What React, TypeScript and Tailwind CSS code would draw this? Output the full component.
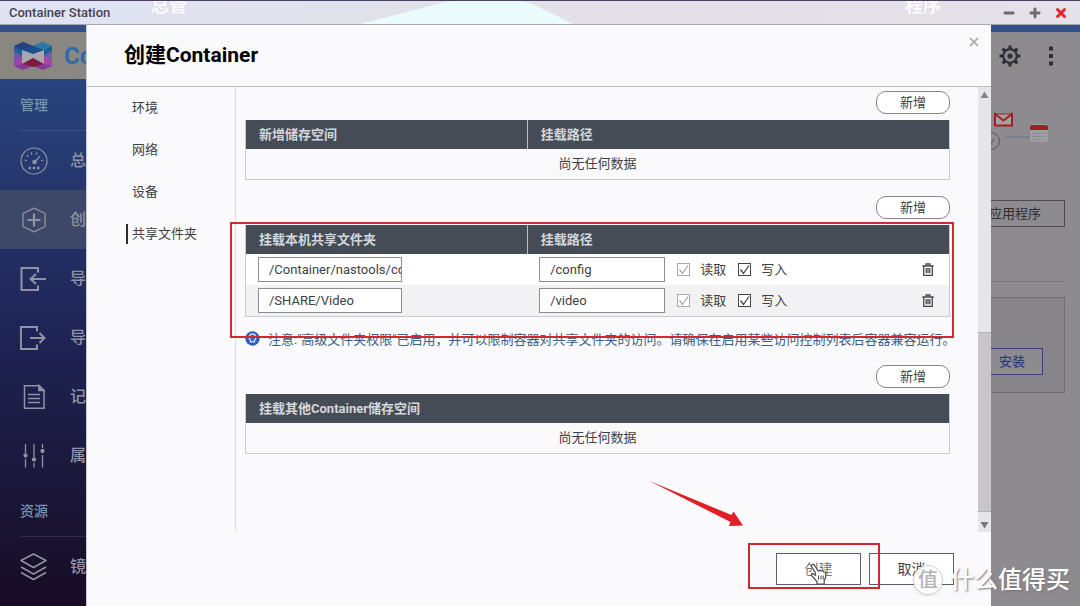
import type { ReactNode } from 'react';
import { Minus, Plus, X } from 'lucide-react';

const stroke = { fill: 'none', stroke: 'currentColor' };

// sidebar icons, all on the same 28px grid
const GaugeIcon = () => (
  <svg viewBox="0 0 28 28" className="size-7" {...stroke} strokeWidth="1.2">
    <circle cx="14" cy="14" r="13" />
    <path d="M4.5 13l2.5.8M6.8 8.3l1.8 1.6M11 5.4l.8 2.4M17 5.4l-.8 2.4M23.5 13l-2.5.8M14 16l6-7" />
    <circle cx="14.5" cy="15" r="1.6" fill="currentColor" />
    <path d="M8.500 21h2.500M12.800 21h2.500M17 21h2.500" strokeWidth="2.400" />
  </svg>
);

const CreateIcon = () => (
  <svg viewBox="0 0 28 28" className="size-7" {...stroke} strokeWidth="1.3">
    <path d="M14 2.200l11 5.300v13L14 25.800 3 20.500v-13z" strokeLinejoin="round" />
    <path d="M14 7.500v13M7.500 14h13" strokeWidth="2.200" />
  </svg>
);

const ImportIcon = () => (
  <svg viewBox="0 0 28 28" className="size-7" {...stroke} strokeWidth="2">
    <path d="M18 7.500V3H1.500v22H18v-4.500" />
    <path d="M26 14H11M16 9l-5.500 5 5.500 5" />
  </svg>
);

const ExportIcon = () => (
  <svg viewBox="0 0 28 28" className="size-7" {...stroke} strokeWidth="2">
    <path d="M17 7.500V3H.9v22H17v-4.500" />
    <path d="M10 14h14M19.500 9l5 5-5 5" />
  </svg>
);

const LogIcon = () => (
  <svg viewBox="0 0 28 28" className="size-7" {...stroke} strokeWidth="1.5">
    <path d="M4.500 2.700h15v4.500h4.500v18H4.500z" />
    <path d="M19 2.500l5 5h-5z" fill="currentColor" />
    <path d="M8 11.500h12M8 15.500h12M8 19.500h12" />
  </svg>
);

const SlidersIcon = () => (
  <svg viewBox="0 0 28 28" className="size-7" {...stroke} strokeWidth="1.3">
    <path d="M5.500 2v9M5.500 17v8.500M14 2v13M14 21v4.500M22.500 2v4M22.500 13v12.500" />
    <g fill="currentColor">
      <circle cx="5.500" cy="13.500" r="1.500" />
      <circle cx="14" cy="17.500" r="1.500" />
      <circle cx="22.500" cy="9" r="1.500" />
    </g>
  </svg>
);

const LayersIcon = () => (
  <svg viewBox="0 0 28 28" className="size-7" {...stroke} strokeWidth="1.500" strokeLinejoin="round">
    <path d="M13.500 1L26 7.500 13.500 14.500 1 7.500z" />
    <path d="M1 14l12.500 7L26 14M1 19.500l12.500 7 12.500-7" />
  </svg>
);

const TrashIcon = () => (
  <svg viewBox="0 0 12 13" className="h-[13px] w-3" {...stroke} strokeWidth="1.300">
    <path d="M.3 3h11.400M4 2.800V1h4v1.800M1.700 3v9.300h8.600V3M4.200 5v5.300M6 5v5.300M7.800 5v5.300" />
  </svg>
);

const GearIcon = () => (
  <svg viewBox="0 0 24 24" className="size-6" {...stroke}>
    <circle cx="12" cy="12" r="6.800" strokeWidth="2.200" />
    <circle cx="12" cy="12" r="2.600" fill="currentColor" stroke="none" />
    <path
      d="M12 1.500v4M12 18.500v4M1.500 12h4M18.500 12h4M4.600 4.600l2.800 2.800M16.600 16.600l2.800 2.800M4.600 19.400l2.800-2.800M16.600 7.400l2.800-2.800"
      strokeWidth="3.200"
    />
  </svg>
);

const Logo = () => (
  <svg viewBox="0 0 38 28" className="h-7 w-[38px]">
    <path d="M0 4l9-4 10 4 10-4 9 4v10H0z" fill="#1f5f9a" />
    <path d="M0 4l9-4 10 4-9 5z" fill="#28407f" />
    <path d="M38 4l-9-4-10 4 9 5z" fill="#2f78ab" />
    <path d="M0 14h38v10l-9 4-10-4-10 4-9-4z" fill="#8a3897" />
    <path d="M0 9l8 5-8 6z" fill="#6c5aa6" />
    <path d="M38 9l-8 5 8 6z" fill="#7a5cae" />
    <path d="M0 20l8-6v8l-8 2z" fill="#9e43a8" />
    <path d="M38 20l-8-6v8l8 2z" fill="#a446ae" />
    <path d="M8 8h22v14H8z" fill="#a9a6ad" />
    <path d="M8 8l11-4 11 4-11 4z" fill="#1b4f8c" />
    <path d="M8 22l11-6 11 6-11 3z" fill="#7e1b3f" />
  </svg>
);

const manageItems = [
  { label: '总览', icon: <GaugeIcon /> },
  { label: '创建', icon: <CreateIcon />, active: true },
  { label: '导入', icon: <ImportIcon /> },
  { label: '导出', icon: <ExportIcon /> },
  { label: '记录', icon: <LogIcon /> },
  { label: '属性', icon: <SlidersIcon /> },
];

const resourceItems = [{ label: '镜像', icon: <LayersIcon /> }];

function MenuGroup({ title, items }: { title: string; items: { label: string; icon: ReactNode; active?: boolean }[] }) {
  return (
    <div>
      <h2 className="ml-5 flex h-[52px] items-center border-b border-white/10 text-sm font-medium text-[#7196ae]">{title}</h2>
      {items.map((item) => (
        <a
          key={item.label}
          href="#"
          className={`flex h-[59px] items-center gap-[22px] pl-5 text-base font-medium text-[#9093a3] ${item.active ? 'bg-[#3d4868]' : ''}`}
        >
          {item.icon}
          {item.label}
        </a>
      ))}
    </div>
  );
}

function AddButton() {
  return (
    <button className="mb-1.5 h-[23px] w-[74px] self-end rounded-[10px] border border-[#85858a] bg-white">新增</button>
  );
}

// bordered table with the dark header row, the first of two columns is 40% wide
function PanelTable({ heads, children }: { heads: string[]; children: ReactNode }) {
  return (
    <div className="border border-t-0 border-[#cbcbcf]">
      <table className="w-full table-fixed">
        <thead className="bg-[#464c56]">
          <tr>
            {heads.map((head, i) => (
              <th
                key={head}
                className={`h-[29px] pl-[13px] text-left font-bold text-[#d3d7dc] ${heads.length > 1 && i === 0 ? 'w-2/5 border-r border-[#b9bcc2]' : ''}`}
              >
                {head}
              </th>
            ))}
          </tr>
        </thead>
        <tbody>{children}</tbody>
      </table>
    </div>
  );
}

function EmptyTable({ heads }: { heads: string[] }) {
  return (
    <PanelTable heads={heads}>
      <tr>
        <td colSpan={heads.length} className="h-[30px] text-center">
          尚无任何数据
        </td>
      </tr>
    </PanelTable>
  );
}

function Check({ label, disabled }: { label: string; disabled?: boolean }) {
  return (
    <label className="flex items-center gap-2.5">
      <span className={`grid ${disabled ? 'text-[#aaaaae]' : 'text-[#444448]'}`}>
        <input
          type="checkbox"
          defaultChecked
          disabled={disabled}
          className="col-start-1 row-start-1 size-[13px] appearance-none border border-current bg-white"
        />
        <svg viewBox="0 0 13 13" className="pointer-events-none col-start-1 row-start-1 size-[13px]" {...stroke} strokeWidth="1.300">
          <path d="M2.500 6.500l3 4 5.500-8" />
        </svg>
      </span>
      {label}
    </label>
  );
}

const mounts = [
  { host: '/Container/nastools/config', path: '/config' },
  { host: '/SHARE/Video', path: '/video' },
];

function SharedFolders() {
  return (
    <div className="relative">
      <PanelTable heads={['挂载本机共享文件夹', '挂载路径']}>
        {mounts.map((mount) => (
          <tr key={mount.path} className="h-[31px] bg-white even:bg-[#f2f1f4]">
            <td className="pl-3">
              <input
                aria-label="挂载本机共享文件夹"
                defaultValue={mount.host}
                className="block h-[25px] w-36 border border-[#8e8e92] bg-white pl-2.5"
              />
            </td>
            <td className="pr-[15px] pl-3">
              <div className="flex items-center gap-3">
                <input
                  aria-label="挂载路径"
                  defaultValue={mount.path}
                  className="h-[25px] w-[126px] border border-[#8e8e92] bg-white pl-2.5"
                />
                <Check label="读取" disabled />
                <Check label="写入" />
                <button aria-label="删除" className="ml-auto text-[#4a4a4e]">
                  <TrashIcon />
                </button>
              </div>
            </td>
          </tr>
        ))}
      </PanelTable>
      {/* highlight around the shared folder mounts */}
      <div className="pointer-events-none absolute -top-[3px] -right-1 -bottom-[21px] -left-[15px] z-10 border-2 border-[#cf2a33]" />
    </div>
  );
}

function Scrollbar() {
  return (
    <div className="flex w-[13px] flex-col bg-[#e6e5ea]">
      <svg viewBox="0 0 13 17" className="h-[17px]" fill="#858388">
        <path d="M6.500 4.500l4 6.500h-8z" />
      </svg>
      <div className="grow-[23]" />
      <div className="grow-[18] border-y border-[#b4b2b6] bg-[#c8c6ca]" />
      <svg viewBox="0 0 13 20" className="h-5" fill="#77757a">
        <path d="M6.500 16.500l-4-6.500h8z" />
      </svg>
    </div>
  );
}

const tabs = ['环境', '网络', '设备', '共享文件夹'];

function CreateDialog() {
  return (
    <div
      role="dialog"
      aria-label="创建Container"
      className="absolute inset-y-0 right-[89px] left-[86px] flex flex-col border-l border-[#c9c8d6] bg-[#faf9fc] text-[13px] text-[#414145]"
    >
      <header className="flex h-[62px] shrink-0 items-center justify-between border-b border-[#bdbcc0] pr-2.5 pl-[37px]">
        <h1 className="text-[21px] font-bold text-black">创建Container</h1>
        <button aria-label="关闭" className="mb-7 text-[#a5a4a8]">
          <X className="size-[14px]" strokeWidth={3} />
        </button>
      </header>

      <div className="flex min-h-0 grow">
        <nav className="w-[149px] shrink-0 border-r border-[#dddce1]">
          {tabs.map((tab) => (
            <div key={tab} className="flex h-[42px] items-center pl-[39px]">
              <a
                href="#"
                className={`border-l-2 pl-1 leading-5 ${tab === '共享文件夹' ? 'border-[#2e2e32]' : 'border-transparent'}`}
              >
                {tab}
              </a>
            </div>
          ))}
        </nav>

        <div className="flex min-w-0 grow flex-col gap-4 pt-1 pr-7 pl-[9px]">
          <section className="flex flex-col">
            <AddButton />
            <EmptyTable heads={['新增储存空间', '挂载路径']} />
          </section>
          <section className="flex flex-col">
            <AddButton />
            <SharedFolders />
            <p className="mt-3.5 flex h-[18px] items-center gap-2 whitespace-nowrap text-[#3c6080]">
              <svg viewBox="0 0 15 15" className="mb-1 size-[15px] shrink-0">
                <circle cx="7.500" cy="7.500" r="7.200" fill="#2a5fc0" />
                <path d="M7.500 3a3.300 3.300 0 0 1 2 6v1.800h-4V9a3.300 3.300 0 0 1 2-6z" fill="none" stroke="#d5e2f8" strokeWidth="1.300" />
              </svg>
              注意:"高级文件夹权限"已启用，并可以限制容器对共享文件夹的访问。请确保在启用某些访问控制列表后容器兼容运行。
            </p>
          </section>
          <section className="flex flex-col">
            <AddButton />
            <EmptyTable heads={['挂载其他Container储存空间']} />
          </section>
        </div>
        <Scrollbar />
      </div>

      <footer className="relative flex h-[74px] shrink-0 items-start justify-end gap-2 pt-[21px] pr-[37px] text-sm">
        <div className="relative">
          <button className="h-8 w-[85px] border border-[#5f5f63] bg-white text-[#77777b]">创建</button>
          <div className="pointer-events-none absolute -top-2.5 -right-[19px] -left-7 h-[46px] border-2 border-[#d2272f]" />
          {/* arrow pointing at the create button */}
          <svg viewBox="0 0 94 48" className="pointer-events-none absolute -top-[73px] -left-[127px] h-12 w-[94px]" fill="#e01f26">
            <path d="M.5 1l82 34 2-3.500 9.500 14-14 .5 1.500-4z" />
          </svg>
          {/* pointer */}
          <svg viewBox="0 0 18 22" className="pointer-events-none absolute top-2.5 left-[34px] h-[22px] w-[18px]">
            <path
              d="M5.500 10L1.800 4q-.8-2 .8-2.500 1.200-.3 2 1L8 8q2-1.400 3 0 2-.8 2.700.8 2-.3 2 1.700v3q0 2-1.500 3.500V21H7v-2.500L1.500 12.500q-.5-2 1.500-1.800l2.500 1.500z"
              fill="#fff"
              stroke="#4b4b4f"
              strokeWidth="1.200"
            />
            <path d="M8.500 12.500v4M11 12.500v4M13.200 12.500v4" stroke="#4b4b4f" strokeWidth="1" />
          </svg>
        </div>
        <button className="h-8 w-[85px] border border-[#5f5f63] bg-white">取消</button>
      </footer>
    </div>
  );
}

export default function App() {
  return (
    <div className="relative flex h-screen flex-col overflow-hidden border-t border-[#4a4262] bg-[#8d8b8f] font-[Roboto,'Noto_Sans_CJK_SC',sans-serif]">
      <header className="relative flex h-6 shrink-0 items-center justify-between overflow-hidden border-b border-[#a9a8ae] bg-linear-to-r from-[#dfe3f4] via-[#e3e1e7] to-[#e4e2e8] pr-3 pl-[9px]">
        {/* wallpaper showing through the title bar */}
        <svg viewBox="0 0 213 23" className="absolute top-0 left-1/3 h-[23px] w-[213px]" fill="#eafcfb">
          <path d="M0 23L82 2l12-2h66l12 3q22 10 41 20z" />
        </svg>
        <span className="absolute -top-[7px] left-[151px] text-lg leading-6 font-medium text-white">总管</span>
        <span className="absolute -top-[7px] right-[139px] text-lg leading-6 font-medium text-white">程序</span>
        <h1 className="text-[13px] font-medium text-[#45454c]">Container Station</h1>
        <div className="flex items-center gap-3 text-[#6d6b70]">
          <button aria-label="最小化"><Minus className="size-[14px]" strokeWidth={5} /></button>
          <button aria-label="最大化"><Plus className="size-[14px]" strokeWidth={5} /></button>
          <button aria-label="关闭窗口" className="text-[#e2272c]"><X className="size-[14px]" strokeWidth={5} /></button>
        </div>
      </header>

      <div className="relative flex min-h-0 grow flex-col">
        <div className="h-[7px] shrink-0 bg-[#344f86]" />
        <div className="flex h-[47px] shrink-0 items-center bg-linear-to-r from-[#8a8782] to-[#8d8b8f] pr-[17px] pl-3.5">
          <Logo />
          <span className="ml-3 text-2xl font-bold text-[#2f6ba5]">Container Station</span>
          <button aria-label="设置" className="mr-[17px] ml-auto text-[#2f2f33]">
            <GearIcon />
          </button>
          <button aria-label="更多" className="text-[#2f2f33]">
            <svg viewBox="0 0 24 24" className="size-6" fill="currentColor">
              <path d="M10 2.500h4v4h-4zM10 10h4v4h-4zM10 17.500h4v4h-4z" />
            </svg>
          </button>
        </div>

        <div className="flex min-h-0 grow">
          <aside className="w-60 shrink-0 overflow-hidden bg-linear-to-b from-[#29447f] via-[#1e2354] to-[#170c24]">
            <MenuGroup title="管理" items={manageItems} />
            <MenuGroup title="资源" items={resourceItems} />
          </aside>
          <main className="flex grow flex-col pr-[15px] pl-6 text-[13px] text-[#2d2d31]">
            <svg viewBox="0 0 84 42" className="mt-[31px] h-[42px] w-[84px] self-end">
              <path d="M24 27h31" stroke="#63798c" />
              <circle cx="10" cy="31" r="8.500" fill="none" stroke="#55555a" />
              <path d="M6 33l3 2 4-6" fill="none" stroke="#55555a" />
              <path d="M14 15.500V4h17v11.500z" fill="#a3a1a5" />
              <path d="M14 15.500V4l8.500 6.500L31 4v11.500z" fill="none" stroke="#a51f24" strokeWidth="2" />
              <path d="M14 4h17M14 15.500h17" stroke="#a51f24" />
              <rect x="49" y="14" width="18" height="18" rx="2" fill="#a09ea2" />
              <path d="M49 20v-3q0-2 2-2h14q2 0 2 2v3z" fill="#a11f24" />
              <path d="M51 23.500h13M51 26.500h13M51 29.500h10" stroke="#7d7b80" strokeDasharray="1.500 1.500" />
            </svg>
            <button className="mt-12 h-[27px] w-[126px] self-end border border-[#4c4c50]">创建应用程序</button>
            <hr className="mt-[54px] border-[#77757a]" />
            <div className="mt-[15px] flex h-24 items-end justify-end border border-[#6f6d72] bg-[#878589] pr-[21px] pb-[17px]">
              <button className="h-[27px] w-[62px] border border-[#36457a] bg-[#8d8b8f] font-medium text-[#2c3f7c]">安装</button>
            </div>
          </main>
        </div>

        <CreateDialog />
      </div>

      {/* watermark */}
      <div className="pointer-events-none absolute right-2.5 bottom-2 flex items-center gap-[7px] text-2xl leading-9 font-medium text-white [text-shadow:1px_1px_2px_#77757a]">
        <span className="flex size-[30px] items-center justify-center rounded-full border border-[#d4d4d8] bg-white/90 text-xl text-[#b4b4b8] shadow [text-shadow:none]">
          值
        </span>
        什么值得买
      </div>
    </div>
  );
}
